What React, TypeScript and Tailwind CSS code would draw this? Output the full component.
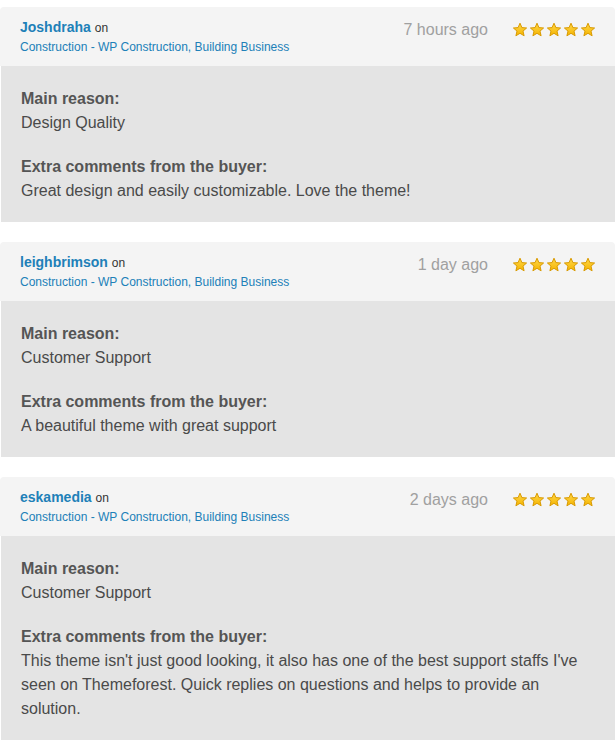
const reviews = [
  {
    user: 'Joshdraha',
    time: '7 hours ago',
    reason: 'Design Quality',
    comment: 'Great design and easily customizable. Love the theme!',
  },
  {
    user: 'leighbrimson',
    time: '1 day ago',
    reason: 'Customer Support',
    comment: 'A beautiful theme with great support',
  },
  {
    user: 'eskamedia',
    time: '2 days ago',
    reason: 'Customer Support',
    comment:
      "This theme isn't just good looking, it also has one of the best support staffs I've seen on Themeforest. Quick replies on questions and helps to provide an solution.",
  },
]

const Star = () => (
  <svg width="16" height="16" viewBox="0 0 16 16">
    <defs>
      <linearGradient id="starFill" x1="0" y1="0" x2="0" y2="1">
        <stop offset="0" stopColor="#ffd84a" />
        <stop offset="1" stopColor="#f5b400" />
      </linearGradient>
    </defs>
    <path
      d="M8 1.2 L9.9 5.6 L14.6 6 L11 9.1 L12.1 13.8 L8 11.3 L3.9 13.8 L5 9.1 L1.4 6 L6.1 5.6 Z"
      fill="url(#starFill)"
      stroke="#d99a00"
      strokeWidth="1"
      strokeLinejoin="round"
    />
  </svg>
)

const App = () => {
  return (
    <div className="w-[616px] bg-white pt-[7px] font-['Liberation_Sans',Arial,sans-serif]">
      {reviews.map((r) => (
        <div key={r.user} className="mb-[20px] w-[615px]">
          <div className="flex h-[59px] items-start justify-between rounded-t-[4px] bg-[#f4f4f4] pt-[10px] pl-[20px] pr-[19px]">
            <div>
              <div className="text-[14px] leading-[20px] text-[#333]">
                <a className="font-bold text-[#2080b8]">{r.user}</a>{' '}
                <span className="text-[12px]">on</span>
              </div>
              <a className="block text-[12px] leading-[18px] text-[#2080b8]">
                Construction - WP Construction, Building Business
              </a>
            </div>
            <div className="flex items-center gap-[24px] pt-[3px]">
              <span className="text-[16px] leading-[20px] text-[#a0a0a0]">{r.time}</span>
              <div className="flex gap-[1px]">
                <Star />
                <Star />
                <Star />
                <Star />
                <Star />
              </div>
            </div>
          </div>
          <div className="ml-[1px] bg-[#e4e4e4] px-[20px] pt-[21px] pb-[19px] text-[16px] leading-[24px] text-[#4a4a4a]">
            <div className="font-bold text-[#555]">Main reason:</div>
            <div>{r.reason}</div>
            <div className="mt-[20px] font-bold text-[#555]">Extra comments from the buyer:</div>
            <div>{r.comment}</div>
          </div>
        </div>
      ))}
    </div>
  )
}

export default App
